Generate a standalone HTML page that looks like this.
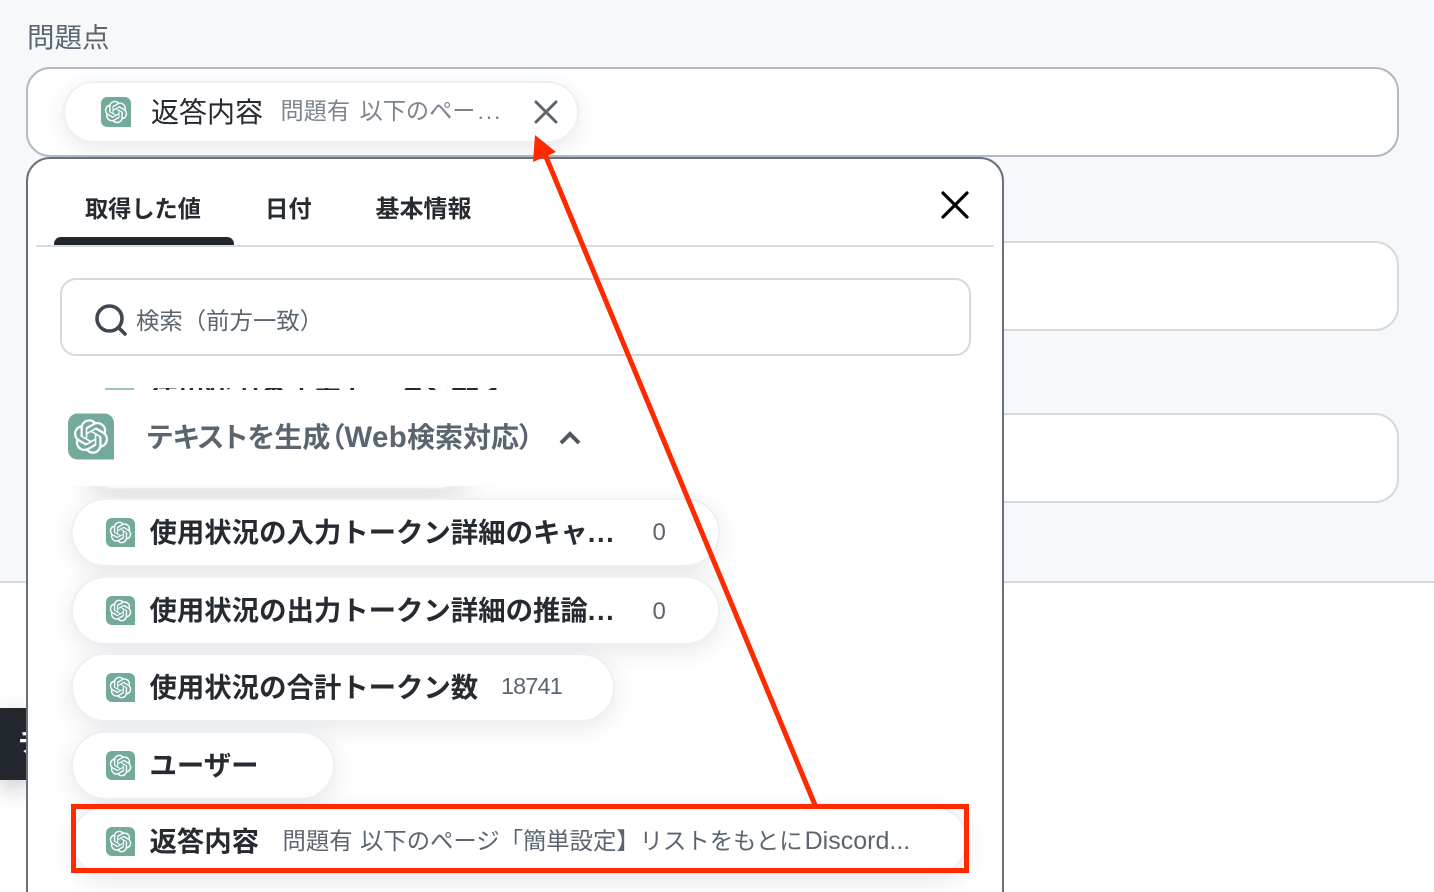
<!DOCTYPE html>
<html lang="ja">
<head>
<meta charset="utf-8">
<title>問題点</title>
<style>
html,body{margin:0;padding:0;width:1434px;height:892px;overflow:hidden;background:#fff}
body{position:relative;font-family:"Liberation Sans","Noto Sans CJK JP",sans-serif;color:#262b31}
div,svg{position:absolute;box-sizing:border-box}
.t{white-space:nowrap;line-height:1}
.inp{left:26px;width:1373px;height:90px;background:#fff;border:2px solid #d4dae1;border-radius:24px}
.pill{left:71px;height:69px;background:#fff;border:2px solid #edf0f5;border-radius:35px;box-shadow:0 6px 24px rgba(40,50,65,.11)}
.n{left:149.5px;font-size:27.4px;font-weight:700;color:#262b31}
.v{font-size:23.35px;color:#5b6570}
.ic{left:105.5px;width:29px;height:29px}
em{font-style:normal;letter-spacing:1.6px}
</style>
</head>
<body>
<svg width="0" height="0" style="left:0;top:0">
<defs>
<symbol id="gpt" viewBox="0 0 48 48">
<path d="M10 0H38A10 10 0 0 1 48 10V48H10A10 10 0 0 1 0 38V10A10 10 0 0 1 10 0Z" fill="#74aa9c"/>
<path transform="translate(6 6) scale(1.5)" fill="#fff" d="M22.2819 9.8211a5.9847 5.9847 0 0 0-.5157-4.9108 6.0462 6.0462 0 0 0-6.5098-2.9A6.0651 6.0651 0 0 0 4.9807 4.1818a5.9847 5.9847 0 0 0-3.9977 2.9 6.0462 6.0462 0 0 0 .7427 7.0966 5.98 5.98 0 0 0 .511 4.9107 6.051 6.051 0 0 0 6.5146 2.9001A5.9847 5.9847 0 0 0 13.2599 24a6.0557 6.0557 0 0 0 5.7718-4.2058 5.9894 5.9894 0 0 0 3.9977-2.9001 6.0557 6.0557 0 0 0-.7475-7.0729zm-9.022 12.6081a4.4755 4.4755 0 0 1-2.8764-1.0408l.1419-.0804 4.7783-2.7582a.7948.7948 0 0 0 .3927-.6813v-6.7369l2.02 1.1686a.071.071 0 0 1 .038.052v5.5826a4.504 4.504 0 0 1-4.4945 4.4944zm-9.6607-4.1254a4.4708 4.4708 0 0 1-.5346-3.0137l.142.0852 4.783 2.7582a.7712.7712 0 0 0 .7806 0l5.8428-3.3685v2.3324a.0804.0804 0 0 1-.0332.0615L9.74 19.9502a4.4992 4.4992 0 0 1-6.1408-1.6464zM2.3408 7.8956a4.485 4.485 0 0 1 2.3655-1.9728V11.6a.7664.7664 0 0 0 .3879.6765l5.8144 3.3543-2.0201 1.1685a.0757.0757 0 0 1-.071 0l-4.8303-2.7865A4.504 4.504 0 0 1 2.3408 7.872zm16.5963 3.8558L13.1038 8.364 15.1192 7.2a.0757.0757 0 0 1 .071 0l4.8303 2.7913a4.4944 4.4944 0 0 1-.6765 8.1042v-5.6772a.79.79 0 0 0-.407-.667zm2.0107-3.0231l-.142-.0852-4.7735-2.7818a.7759.7759 0 0 0-.7854 0L9.409 9.2297V6.8974a.0662.0662 0 0 1 .0284-.0615l4.8303-2.7866a4.4992 4.4992 0 0 1 6.6802 4.66zM8.3065 12.863l-2.02-1.1638a.0804.0804 0 0 1-.038-.0567V6.0742a4.4992 4.4992 0 0 1 7.3757-3.4537l-.142.0805L8.704 5.459a.7948.7948 0 0 0-.3927.6813zm1.0976-2.3654l2.602-1.4998 2.6069 1.4998v2.9994l-2.5974 1.4997-2.6067-1.4997Z"/>
</symbol>
</defs>
</svg>

<div style="left:0;top:0;width:1434px;height:583px;background:#f7f8fa;border-bottom:2px solid #d4dae1"></div>
<div class="t" style="left:27px;top:24px;font-size:27.5px;color:#5b6570">問題点</div>

<div class="inp" style="top:67px;border-color:#b3bac4"></div>
<div class="inp" style="top:241px"></div>
<div class="inp" style="top:413px"></div>

<div style="left:63px;top:81px;width:516px;height:62px;background:#fff;border:2px solid #edf0f5;border-radius:31px;box-shadow:0 6px 22px rgba(40,50,65,.10)"></div>
<svg style="left:101px;top:97px;width:30px;height:30px"><use href="#gpt"/></svg>
<div class="t" style="left:151px;top:99px;font-size:28px;color:#262b31">返答内容</div>
<div class="t" style="left:280.5px;top:100px;font-size:23.2px;color:#7c848e;word-spacing:3px">問題有 以下のペー<em style="letter-spacing:1.8px;margin-left:2px">...</em></div>
<svg style="left:534px;top:100px;width:24px;height:24px" viewBox="0 0 24 24"><path d="M2 2L22 22M22 2L2 22" stroke="#5b6570" stroke-width="3" stroke-linecap="round"/></svg>

<div style="left:0;top:708px;width:30px;height:72px;background:#23282f;box-shadow:0 8px 24px rgba(30,35,45,.25)"></div>
<div class="t" style="left:18px;top:730px;font-size:27px;font-weight:700;color:#fff">チ</div>

<div id="panel" style="left:26px;top:157px;width:978px;height:760px;background:#fff;border:2px solid #68717c;border-radius:24px;overflow:hidden"></div>

<div class="t" style="left:85px;top:198px;font-size:23.2px;font-weight:700;color:#262b31">取得した値</div>
<div class="t" style="left:265px;top:198px;font-size:23.4px;font-weight:700;color:#262b31">日付</div>
<div class="t" style="left:375.5px;top:198px;font-size:24px;font-weight:700;color:#262b31">基本情報</div>
<div style="left:53.5px;top:237px;width:180px;height:8px;background:#23282f;border-radius:7px 7px 0 0"></div>
<div style="left:36px;top:245px;width:958px;height:2px;background:#d8dde3"></div>
<svg style="left:940px;top:190px;width:30px;height:30px" viewBox="0 0 30 30"><path d="M3 3L27 27M27 3L3 27" stroke="#000" stroke-width="3.2" stroke-linecap="round"/></svg>

<div style="left:59.5px;top:278px;width:911px;height:78px;border:2px solid #d4dae1;border-radius:16px;background:#fff"></div>
<svg style="left:93.5px;top:303px;width:34px;height:34px" viewBox="0 0 34 34"><circle cx="15.5" cy="15.5" r="12.5" fill="none" stroke="#3f4750" stroke-width="3.6"/><path d="M24.5 24.5L31 31" stroke="#3f4750" stroke-width="3.6" stroke-linecap="round"/></svg>
<div class="t" style="left:136px;top:310px;font-size:23.4px;color:#5b6570">検索（前方一致）</div>

<!-- scrolled rows behind sticky header -->
<div style="left:85px;top:387.5px;width:520px;height:2px;overflow:hidden;background:#fff">
<div class="t" style="left:65px;top:-4.5px;font-size:27.4px;font-weight:700;color:#262b31">使用状況の入力トークン数 1</div>
<div style="left:20px;top:0;width:29px;height:2px;background:#9cc4b9"></div>
</div>
<div style="left:28px;top:390px;width:961px;height:120px;overflow:hidden">
<div class="pill" style="left:52px;top:30px;width:392px;height:70px;background:#fbfbfc;box-shadow:0 6px 26px rgba(40,50,65,.16)"></div>
<div style="left:0;top:0;width:961px;height:96px;background:#fff"></div>
</div>

<svg style="left:67.5px;top:413px;width:46px;height:47px"><use href="#gpt"/></svg>
<div class="t" style="left:147px;top:423px;font-size:28px;font-weight:700;color:#5b6570;font-feature-settings:'palt'">テキストを生成（<span style="font-size:29.5px;letter-spacing:.3px">Web</span>検索対応）</div>
<svg style="left:558px;top:431px;width:24px;height:15px" viewBox="0 0 24 15"><path d="M3 12L12 3L21 12" fill="none" stroke="#4f5862" stroke-width="4"/></svg>

<div class="pill" style="top:498px;width:649px"></div>
<svg class="ic" style="top:518px"><use href="#gpt"/></svg>
<div class="t n" style="top:519px">使用状況の入力トークン詳細のキャ<em>...</em></div>
<div class="t v" style="left:652.5px;top:521px;font-size:24px">0</div>

<div class="pill" style="top:576px;width:649px"></div>
<svg class="ic" style="top:596px"><use href="#gpt"/></svg>
<div class="t n" style="top:597px">使用状況の出力トークン詳細の推論<em>...</em></div>
<div class="t v" style="left:652.5px;top:600px;font-size:24px">0</div>

<div class="pill" style="top:653px;width:544px"></div>
<svg class="ic" style="top:672.5px"><use href="#gpt"/></svg>
<div class="t n" style="top:674px">使用状況の合計トークン数</div>
<div class="t v" style="left:501px;top:675px;letter-spacing:-.8px">18741</div>

<div class="pill" style="top:731px;width:264px"></div>
<svg class="ic" style="top:750.5px"><use href="#gpt"/></svg>
<div class="t n" style="top:752px">ユーザー</div>

<div class="pill" style="top:806px;width:897px"></div>
<svg class="ic" style="top:827px"><use href="#gpt"/></svg>
<div class="t n" style="top:828px">返答内容</div>
<div class="t v" style="left:282.5px;top:829px;word-spacing:1px">問題有 以下のページ「簡単設定】リストをもとに<span style="font-size:25px;margin-left:2px">Discord</span><span style="font-size:25px">...</span></div>

<svg style="left:0;top:0;width:1434px;height:892px" viewBox="0 0 1434 892">
<rect x="73.5" y="806.5" width="893" height="64" fill="none" stroke="#ff2a00" stroke-width="5"/>
<path d="M815 805L544 152" stroke="#ff2a00" stroke-width="5" fill="none"/>
<path d="M535 135L556 152L533 162Z" fill="#ff2a00"/>
</svg>
</body>
</html>
